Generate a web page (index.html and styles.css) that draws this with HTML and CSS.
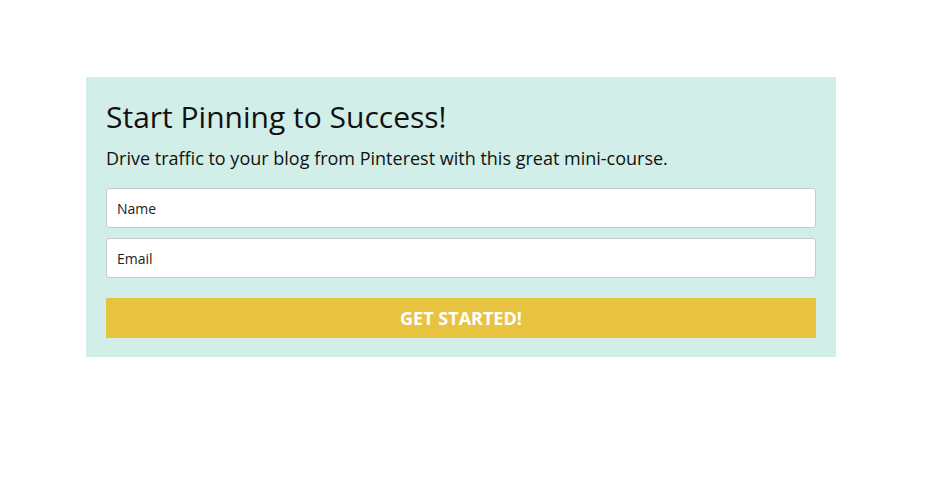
FILE: index.html
```html
<!DOCTYPE html>
<html>
<head>
<meta charset="utf-8">
<link rel="stylesheet" href="styles.css">
</head>
<body>
<div class="page">
  <form class="optin">
    <h2 class="title">Start Pinning to Success!</h2>
    <p class="lead">Drive traffic to your blog from Pinterest with this great mini-course.</p>
    <div class="field">Name</div>
    <div class="field">Email</div>
    <div class="button">GET STARTED!</div>
  </form>
</div>
</body>
</html>
```
FILE: styles.css
```css
html, body {
  margin: 0;
  padding: 0;
  background: #ffffff;
}
body {
  font-family: "Open Sans", "Liberation Sans", sans-serif;
  color: #111;
}
.page {
  padding: 77px 0 0 86px;
}
.optin {
  width: 710px;
  padding: 20px 20px 19px;
  background: #d1eee8;
  display: flex;
  flex-direction: column;
}
.title {
  margin: 0;
  font-size: 30px;
  font-weight: 400;
  line-height: 40px;
  color: #111;
}
.lead {
  margin: 8px 0 17px;
  font-size: 18px;
  line-height: 26px;
  color: #111;
}
.field {
  box-sizing: border-box;
  height: 40px;
  margin-bottom: 10px;
  padding: 1px 10px 0;
  background: #fff;
  border: 1px solid #c3cbc9;
  border-radius: 3px;
  font-size: 14px;
  line-height: 37px;
  color: #222;
}
.button {
  margin-top: 10px;
  height: 40px;
  background: #e8c33f;
  color: #fff;
  font-weight: 700;
  font-size: 18px;
  line-height: 40px;
  text-align: center;
}
```
